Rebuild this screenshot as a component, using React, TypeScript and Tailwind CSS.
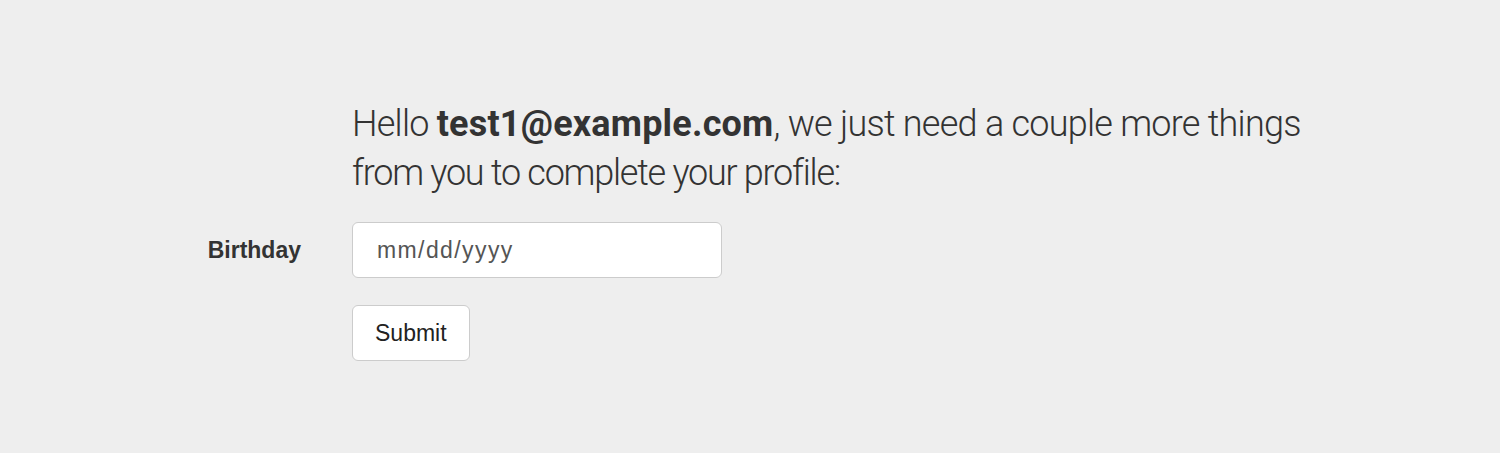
export default function App() {
  return (
    <main className="min-h-[453px] w-full bg-[#eeeeee] font-['Liberation_Sans',Arial,sans-serif] text-[#333]">
      <div className="grid grid-cols-[352px_370px] pt-[100px]">
        <div />
        <h1 className="w-[1000px] whitespace-nowrap font-['Roboto',sans-serif] text-[36px] leading-[49px] font-light text-[#333]">
          <span className="block tracking-[-0.75px]">
            Hello <span className="font-bold tracking-[0.2px]">test1@example.com</span>, we just need a couple more things
          </span>
          <span className="block tracking-[-1.25px]">from you to complete your profile:</span>
        </h1>

        <label className="mt-6 flex h-14 items-center justify-end pr-[51px] text-[23px] font-bold">
          Birthday
        </label>
        <input
          type="text"
          placeholder="mm/dd/yyyy"
          className="mt-6 h-14 w-[370px] rounded-md border border-[#cccccc] bg-white px-6 text-[23px] tracking-[1.4px] text-[#555] placeholder:text-[#555] outline-none"
        />

        <div />
        <div className="mt-[27px]">
          <button className="h-14 rounded-md border border-[#cccccc] bg-white px-[22px] text-[23px] text-[#222]">
            Submit
          </button>
        </div>
      </div>
    </main>
  );
}
